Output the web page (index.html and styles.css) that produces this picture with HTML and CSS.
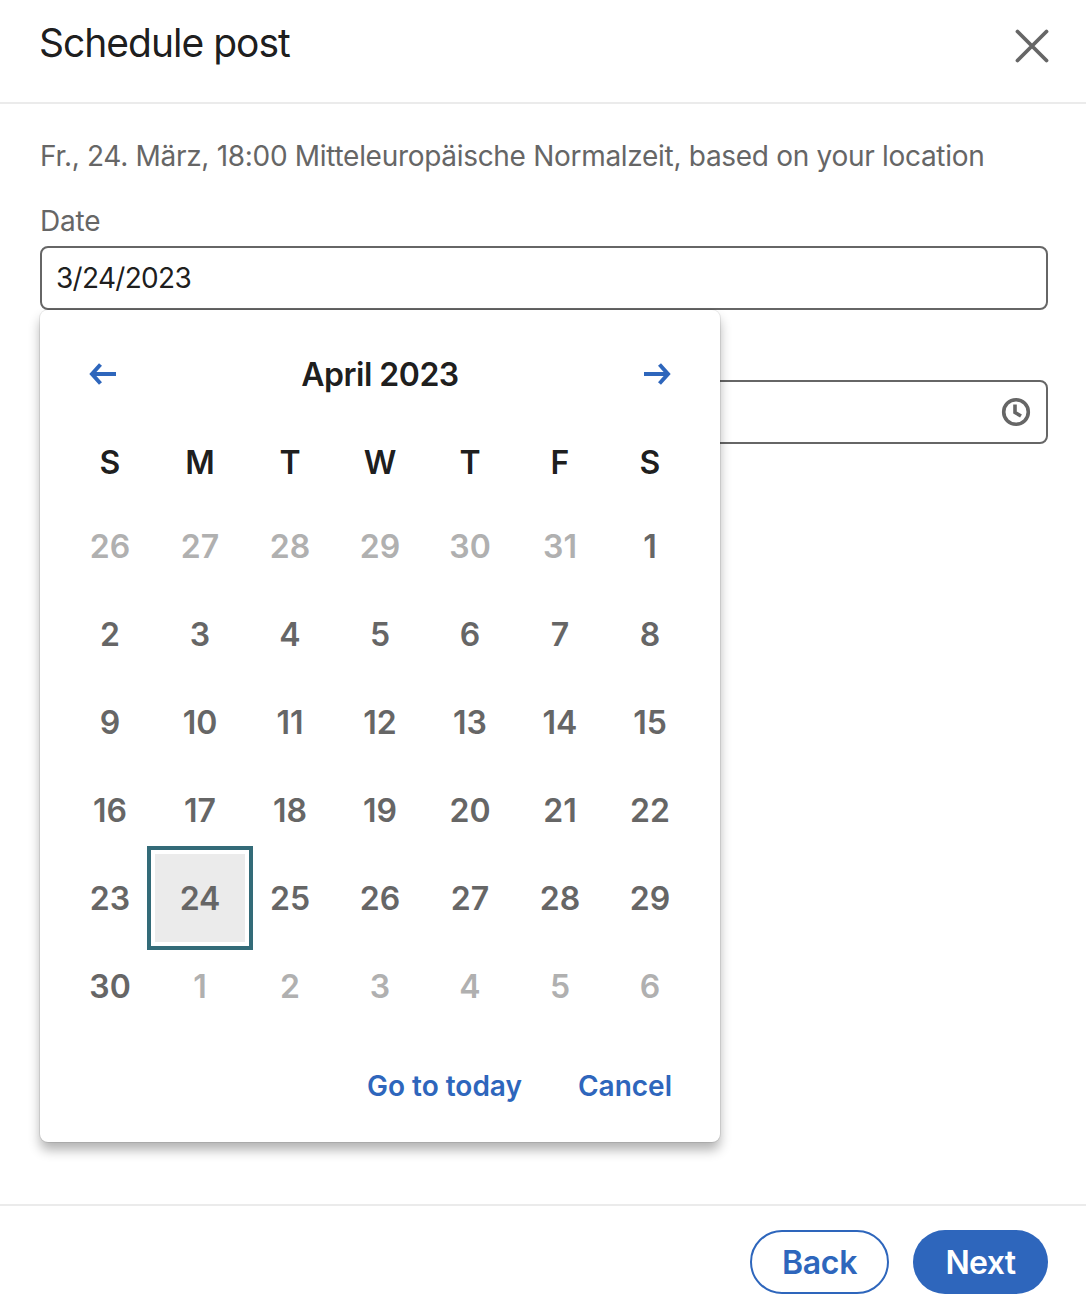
FILE: index.html
```html
<!DOCTYPE html>
<html lang="en">
<head>
<meta charset="utf-8">
<title>Schedule post</title>
<link rel="stylesheet" href="styles.css">
</head>
<body>
<div class="modal">
  <header class="modal-header">
    <h1 class="modal-title">Schedule post</h1>
    <button class="close-btn" aria-label="Close">
      <svg width="34" height="34" viewBox="0 0 34 34"><path d="M2.5 2.5 L31.5 31.5 M31.5 2.5 L2.5 31.5" stroke="#666" stroke-width="3.8" stroke-linecap="round" fill="none"/></svg>
    </button>
  </header>
  <main class="modal-body">
    <p class="tz">Fr., 24. März, 18:00 Mitteleuropäische Normalzeit, based on your location</p>
    <label class="field-label">Date</label>
    <div class="date-wrap">
      <div class="input date-input">3/24/2023</div>
      <div class="calendar">
        <div class="cal-head">
          <button class="nav" aria-label="Previous month">
            <svg width="28" height="22" viewBox="0 0 28 22"><path d="M27 11 H3 M11.5 1.5 L3 11 L11.5 20.5" stroke="#2e66bc" stroke-width="4" fill="none"/></svg>
          </button>
          <div class="month">April 2023</div>
          <button class="nav" aria-label="Next month">
            <svg width="28" height="22" viewBox="0 0 28 22"><path d="M1 11 H25 M16.5 1.5 L25 11 L16.5 20.5" stroke="#2e66bc" stroke-width="4" fill="none"/></svg>
          </button>
        </div>
        <div class="grid">
          <div class="dow">S</div><div class="dow">M</div><div class="dow">T</div><div class="dow">W</div><div class="dow">T</div><div class="dow">F</div><div class="dow">S</div>
          <div class="day muted">26</div><div class="day muted">27</div><div class="day muted">28</div><div class="day muted">29</div><div class="day muted">30</div><div class="day muted">31</div><div class="day">1</div>
          <div class="day">2</div><div class="day">3</div><div class="day">4</div><div class="day">5</div><div class="day">6</div><div class="day">7</div><div class="day">8</div>
          <div class="day">9</div><div class="day">10</div><div class="day">11</div><div class="day">12</div><div class="day">13</div><div class="day">14</div><div class="day">15</div>
          <div class="day">16</div><div class="day">17</div><div class="day">18</div><div class="day">19</div><div class="day">20</div><div class="day">21</div><div class="day">22</div>
          <div class="day">23</div><div class="day selected"><span class="sel-inner">24</span></div><div class="day">25</div><div class="day">26</div><div class="day">27</div><div class="day">28</div><div class="day">29</div>
          <div class="day">30</div><div class="day muted">1</div><div class="day muted">2</div><div class="day muted">3</div><div class="day muted">4</div><div class="day muted">5</div><div class="day muted">6</div>
        </div>
        <div class="cal-actions">
          <a class="link">Go to today</a>
          <a class="link">Cancel</a>
        </div>
      </div>
    </div>
    <div class="input time-input">
      <svg width="30" height="30" viewBox="0 0 30 30"><circle cx="15" cy="15" r="12.3" stroke="#666" stroke-width="3.6" fill="none"/><path d="M14 7.5 V15.5 L20 19" stroke="#666" stroke-width="3.6" fill="none"/></svg>
    </div>
  </main>
  <footer class="modal-footer">
    <button class="btn btn-outline">Back</button>
    <button class="btn btn-solid">Next</button>
  </footer>
</div>
</body>
</html>
```

FILE: styles.css
```css
* { box-sizing: border-box; }
html, body { margin: 0; padding: 0; background: #fff; }
body { font-family: Inter, "Liberation Sans", sans-serif; color: #666; }
button { font-family: inherit; background: none; border: 0; padding: 0; }
.modal { width: 1086px; height: 1308px; display: flex; flex-direction: column; }
.modal-header { height: 104px; flex: none; border-bottom: 2px solid #ebebeb; padding: 0 37px 0 40px; display: flex; justify-content: space-between; align-items: flex-start; }
.modal-title { margin: 17px 0 0 -1px; font-size: 39px; line-height: 52px; font-weight: 400; letter-spacing: -1px; color: rgba(0,0,0,.9); }
.close-btn { margin-top: 29px; display: flex; }
.modal-body { flex: 1; padding: 34px 38px 0 40px; }
.tz { margin: 0; font-size: 28px; line-height: 37px; letter-spacing: -0.3px; }
.field-label { display: block; margin-top: 27px; font-size: 28px; line-height: 38px; letter-spacing: -0.2px; }
.date-wrap { position: relative; margin-top: 6px; }
.input { height: 64px; border: 2px solid #666; border-radius: 8px; padding: 0 14px; display: flex; align-items: center; font-size: 28px; color: rgba(0,0,0,.9); }
.date-input { letter-spacing: -0.7px; }
.time-input { margin-top: 70px; justify-content: flex-end; padding-right: 15px; }
.calendar { position: absolute; top: 64px; left: 0; width: 680px; height: 832px; background: #fff; border-radius: 8px; box-shadow: 0 0 0 1px rgba(0,0,0,.08), 0 8px 12px rgba(0,0,0,.3); padding: 0 25px; z-index: 2; }
.cal-head { height: 128px; display: flex; justify-content: space-between; align-items: center; padding: 0 24px; }
.nav { display: flex; }
.month { font-size: 32px; font-weight: 600; color: rgba(0,0,0,.9); letter-spacing: -0.5px; }
.grid { display: grid; grid-template-columns: repeat(7, 90px); grid-template-rows: 80px; grid-auto-rows: 88px; margin-top: -16px; }
.dow { display: flex; align-items: center; justify-content: center; font-size: 32px; font-weight: 600; color: rgba(0,0,0,.9); }
.day { display: flex; align-items: center; justify-content: center; font-size: 32px; font-weight: 600; color: #666; }
.muted { color: #b0b0b0; }
.selected { position: relative; }
.sel-inner { position: absolute; left: -8px; top: -8px; width: 106px; height: 104px; border: 4px solid #336b78; background: #ebebeb; box-shadow: inset 0 0 0 4px #fff; display: flex; align-items: center; justify-content: center; }
.cal-actions { display: flex; justify-content: flex-end; gap: 56px; padding-right: 23px; margin-top: 36px; }
.link { font-size: 28px; font-weight: 600; color: #2e66bc; line-height: 40px; }
.modal-footer { height: 104px; flex: none; border-top: 2px solid #ebebeb; display: flex; justify-content: flex-end; gap: 24px; padding: 24px 38px 0 0; }
.btn { height: 64px; border-radius: 32px; font-size: 32px; font-weight: 600; letter-spacing: -0.3px; }
.btn-outline { width: 139px; border: 2px solid #2e66bc; color: #2e66bc; background: #fff; }
.btn-solid { width: 135px; background: #2e66bc; color: #fff; letter-spacing: -0.6px; }
```
